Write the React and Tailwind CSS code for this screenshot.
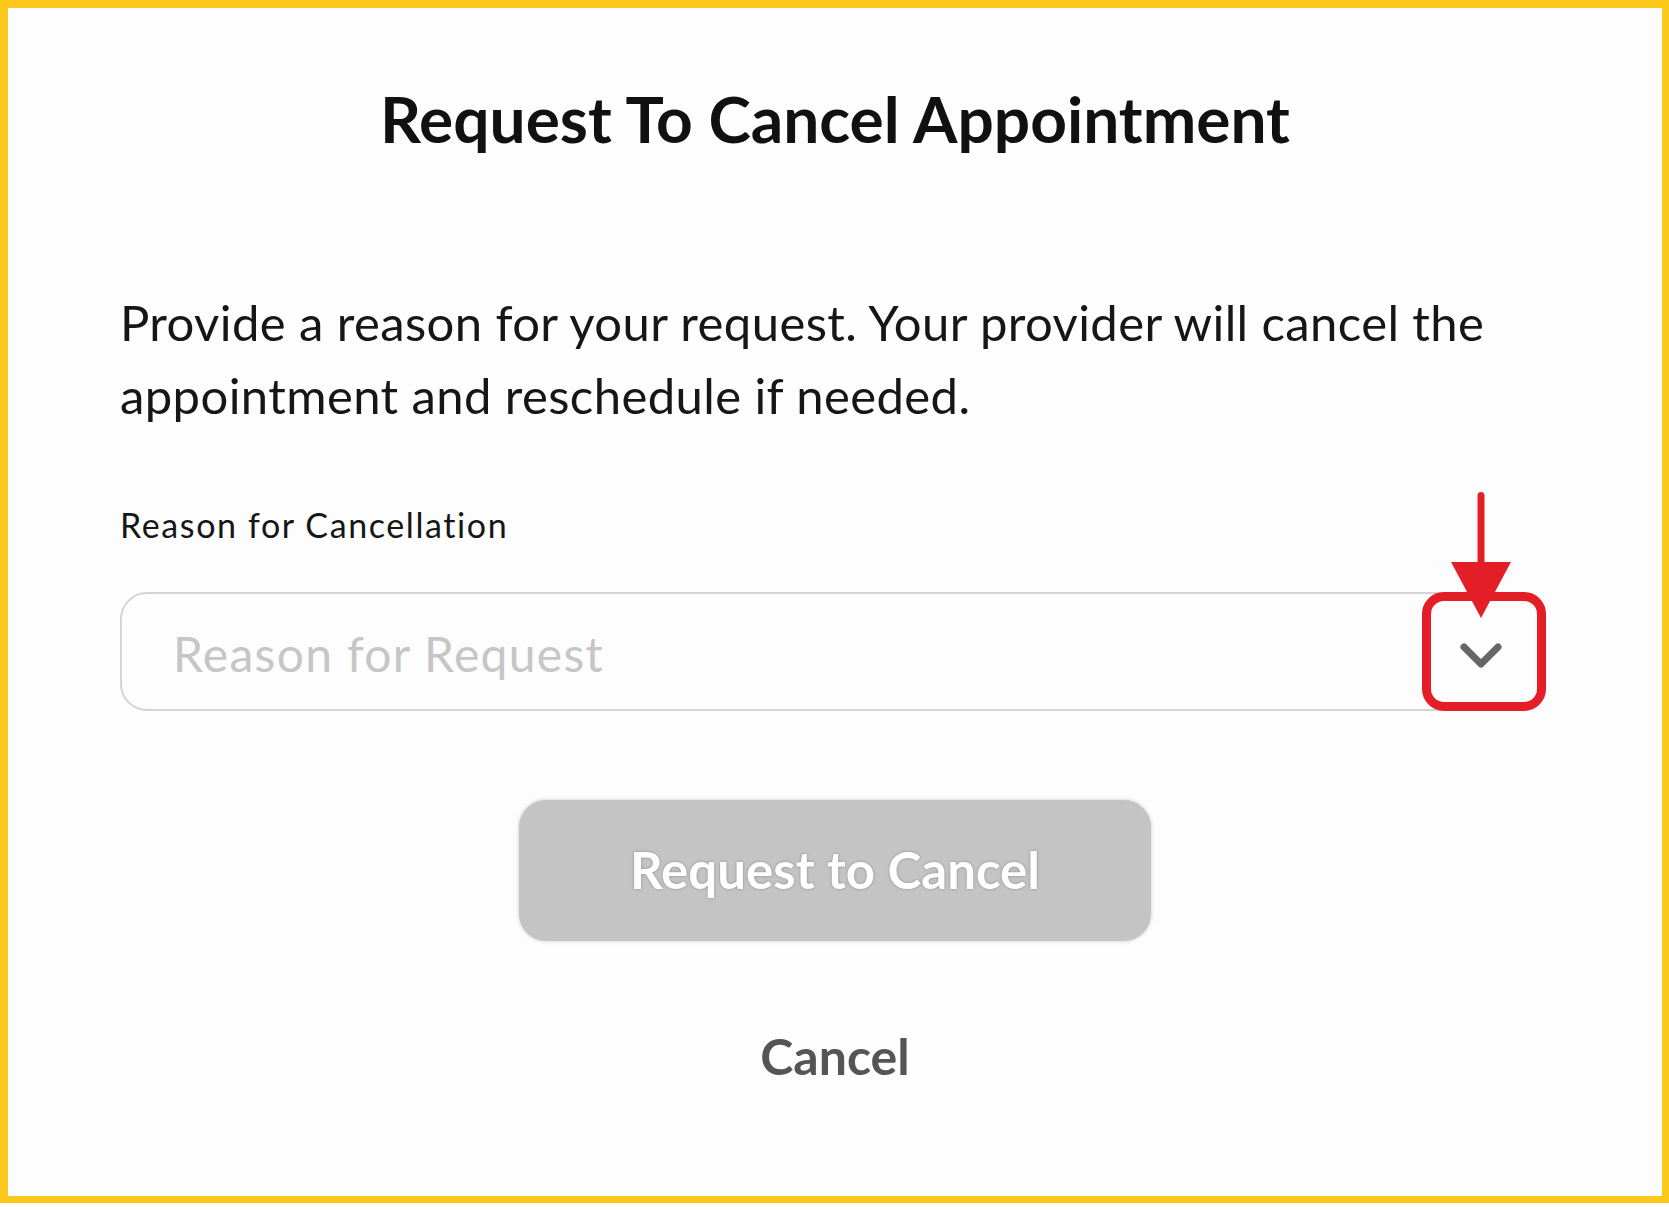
import React from 'react';

const font = { fontFamily: 'Lato, "Open Sans", sans-serif' };

const Chevron = () => (
  <svg width="44" height="28" viewBox="0 0 44 28" fill="none" stroke="#666666" strokeWidth="7" strokeLinecap="round" strokeLinejoin="round">
    <path d="M5 5 L22 22 L39 5" />
  </svg>
);

// Red call-out arrow drawn over the select
const Arrow = () => (
  <svg width="60" height="126" viewBox="0 0 60 126" fill="#e41e26">
    <rect x="26.5" y="0" width="7" height="74" rx="3.5" />
    <polygon points="0,70 60,70 30,126" />
  </svg>
);

export default function App() {
  return (
    <div className="w-[1669px] h-[1207px] bg-white" style={font}>
      <div className="h-[1203px] border-t-8 border-l-8 border-b-[7px] border-r-[7px] border-[#fcc81c] bg-[#fdfdfd] flex flex-col">
        <h1 className="mt-[79px] text-center text-[64px] leading-[64px] font-bold text-[#111111]">
          Request To Cancel Appointment
        </h1>

        <div className="pl-[112px] flex flex-col">
          <p className="mt-[135px] w-[1440px] text-[49px] leading-[73px] tracking-[0.4px] text-[#161616]">
            Provide a reason for your request. Your provider will cancel the appointment and reschedule if needed.
          </p>

          <label className="mt-[77px] text-[34px] leading-[32px] tracking-[1.6px] text-[#161616]">Reason for Cancellation</label>

          <div className="relative mt-[51px] w-[1423px] h-[119px]">
            <div className="h-full rounded-[27px] border-2 border-[#d4d4d4] bg-[#fdfdfd] flex items-center justify-between pl-[51px] pr-[38px]">
              <span className="text-[48px] leading-none pt-[4px] tracking-[1.3px] text-[#c6c6c6]">Reason for Request</span>
              <span className="pt-[8px]">
                <Chevron />
              </span>
            </div>
            <div className="absolute right-[-3px] top-0 w-[124px] h-[119px] rounded-[22px] border-[9px] border-[#e41e26]" />
            <div className="absolute left-[1331px] top-[-100px]">
              <Arrow />
            </div>
          </div>
        </div>

        <div className="mt-[89px] flex justify-center">
          <button className="w-[632px] h-[141px] rounded-[27px] bg-[#c4c4c4] shadow-[0_0_4px_rgba(0,0,0,0.2)] text-white font-bold text-[51px] [text-shadow:0_0_3px_rgba(0,0,0,0.3)]">
            Request to Cancel
          </button>
        </div>

        <div className="mt-[90px] flex justify-center">
          <span className="text-[50px] leading-[50px] font-bold text-[#555555]">Cancel</span>
        </div>
      </div>
    </div>
  );
}
